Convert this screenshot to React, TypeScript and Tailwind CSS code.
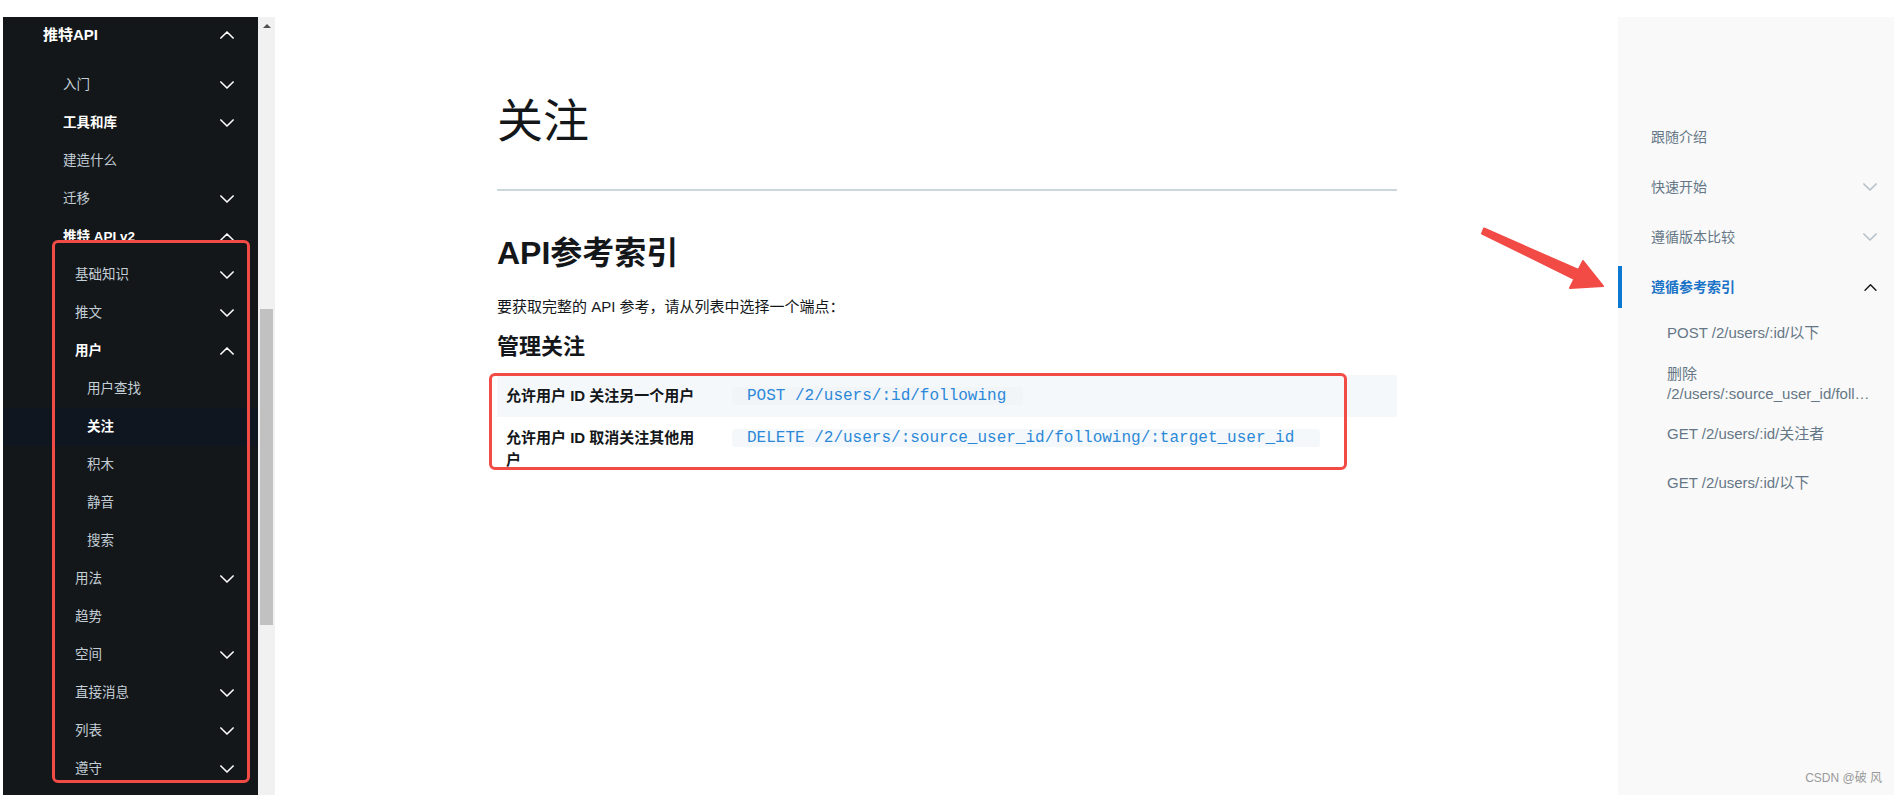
import React from 'react';

type NavItem = {
  label: string;
  level: 1 | 2 | 3 | 4;
  bold?: boolean;
  chevron?: 'up' | 'down';
  active?: boolean;
};

const navItems: NavItem[] = [
  { label: '入门', level: 2, chevron: 'down' },
  { label: '工具和库', level: 2, bold: true, chevron: 'down' },
  { label: '建造什么', level: 2 },
  { label: '迁移', level: 2, chevron: 'down' },
  { label: '推特 API v2', level: 2, bold: true, chevron: 'up' },
  { label: '基础知识', level: 3, chevron: 'down' },
  { label: '推文', level: 3, chevron: 'down' },
  { label: '用户', level: 3, bold: true, chevron: 'up' },
  { label: '用户查找', level: 4 },
  { label: '关注', level: 4, bold: true, active: true },
  { label: '积木', level: 4 },
  { label: '静音', level: 4 },
  { label: '搜索', level: 4 },
  { label: '用法', level: 3, chevron: 'down' },
  { label: '趋势', level: 3 },
  { label: '空间', level: 3, chevron: 'down' },
  { label: '直接消息', level: 3, chevron: 'down' },
  { label: '列表', level: 3, chevron: 'down' },
  { label: '遵守', level: 3, chevron: 'down' },
];

const indent: Record<number, string> = {
  1: 'pl-[40px]',
  2: 'pl-[60px]',
  3: 'pl-[72px]',
  4: 'pl-[84px]',
};

function Chevron({ dir, className }: { dir: 'up' | 'down'; className?: string }) {
  return (
    <svg viewBox="0 0 16 9" className={className} fill="none" stroke="currentColor" strokeWidth={1.8} strokeLinecap="round" strokeLinejoin="round">
      {dir === 'down' ? <path d="M1 1 L8 8 L15 1" /> : <path d="M1 8 L8 1 L15 8" />}
    </svg>
  );
}

function Sidebar() {
  return (
    <div className="w-[255px] h-full bg-[#14171a] overflow-hidden">
      <div className="h-[36px] flex items-center justify-between pl-[40px] pr-[24px]">
        <span className="text-[15px] font-bold text-white">推特API</span>
        <Chevron dir="up" className="w-[14px] h-[8px] text-white" />
      </div>
      <div className="mt-[13px]">
        {navItems.map((item) => (
          <div
            key={item.label}
            className={`h-[38px] flex items-center justify-between pr-[24px] ${indent[item.level]} ${item.active ? 'bg-[#0f1620]' : ''}`}
          >
            <span className={`text-[13.5px] ${item.bold ? 'font-bold text-white' : 'text-[#c3ced6]'}`}>{item.label}</span>
            {item.chevron && <Chevron dir={item.chevron} className="w-[14px] h-[8px] text-white" />}
          </div>
        ))}
      </div>
    </div>
  );
}

function Scrollbar() {
  return (
    <div className="w-[17px] h-full bg-[#f1f1f1] flex flex-col">
      <div className="h-[17px] flex items-center justify-center">
        <div className="w-0 h-0 border-l-[4px] border-r-[4px] border-b-[4px] border-l-transparent border-r-transparent border-b-[#505050]" />
      </div>
      <div className="mt-[275px] ml-[2px] w-[13px] h-[316px] bg-[#c1c1c1]" />
    </div>
  );
}

function MainContent() {
  return (
    <div className="flex-1 h-full bg-white pl-[222px]">
      <div className="w-[900px]">
        <h1 className="mt-[76px] text-[46px] leading-[56px] font-normal text-[#14171a]">关注</h1>
        <div className="mt-[40px] border-t-2 border-[#ccd6dd]" />
        <h2 className="mt-[42px] text-[32px] leading-[40px] font-bold text-[#14171a]">API参考索引</h2>
        <p className="mt-[23px] text-[15px] leading-[22px] text-[#14171a]">要获取完整的 API 参考，请从列表中选择一个端点：</p>
        <h3 className="mt-[14px] text-[22px] leading-[30px] font-bold text-[#14171a]">管理关注</h3>
        <div className="mt-[13px] text-[15px] leading-[22px]">
          <div className="grid grid-cols-[225px_1fr] bg-[#f5f8fa] py-[10px]">
            <div className="pl-[9px] pr-[20px] font-bold text-[#14171a]">允许用户 ID 关注另一个用户</div>
            <div className="pl-[10px] flex items-start pt-[2px]">
              <code className="font-['Liberation_Mono',monospace] text-[16px] leading-[18px] text-[#2b88d8] bg-[#f1f5f8] rounded-[3px] pl-[15px] pr-[17px]">
                POST /2/users/:id/following
              </code>
            </div>
          </div>
          <div className="grid grid-cols-[225px_1fr] bg-white py-[10px]">
            <div className="pl-[9px] pr-[20px] font-bold text-[#14171a]">允许用户 ID 取消关注其他用户</div>
            <div className="pl-[10px] flex items-start pt-[2px]">
              <code className="font-['Liberation_Mono',monospace] text-[16px] leading-[18px] text-[#2b88d8] bg-[#f5f8fa] rounded-[3px] pl-[15px] pr-[26px]">
                DELETE /2/users/:source_user_id/following/:target_user_id
              </code>
            </div>
          </div>
        </div>
      </div>
    </div>
  );
}

function RightPanel() {
  return (
    <div className="w-[276px] h-full bg-[#f9f9f9] pt-[95px] text-[14px]">
      <div className="h-[50px] flex items-center pl-[33px] text-[#657786]">跟随介绍</div>
      <div className="h-[50px] flex items-center justify-between pl-[33px] pr-[17px] text-[#657786]">
        <span>快速开始</span>
        <Chevron dir="down" className="w-[14px] h-[8px] text-[#b4c0c9]" />
      </div>
      <div className="h-[50px] flex items-center justify-between pl-[33px] pr-[17px] text-[#657786]">
        <span>遵循版本比较</span>
        <Chevron dir="down" className="w-[14px] h-[8px] text-[#b4c0c9]" />
      </div>
      <div className="h-[50px] flex items-center">
        <div className="w-[4px] h-[42px] bg-[#0b78d1]" />
        <div className="flex-1 flex items-center justify-between pl-[29px] pr-[17px]">
          <span className="font-bold text-[#1a73c7]">遵循参考索引</span>
          <Chevron dir="up" className="w-[13px] h-[7px] text-[#14171a]" />
        </div>
      </div>
      <div className="pl-[49px] text-[15px] leading-[20px] text-[#657786]">
        <div className="mt-[11px]">POST /2/users/:id/以下</div>
        <div className="mt-[21px]">
          删除
          <br />
          /2/users/:source_user_id/foll…
        </div>
        <div className="mt-[20px]">GET /2/users/:id/关注者</div>
        <div className="mt-[29px]">GET /2/users/:id/以下</div>
      </div>
    </div>
  );
}

export default function App() {
  return (
    <div className="relative w-[1894px] h-[795px] overflow-hidden bg-white font-['Liberation_Sans','Noto_Sans_CJK_SC',sans-serif]">
      <div className="flex h-full pt-[17px]">
        <div className="w-[3px] h-full bg-white" />
        <Sidebar />
        <Scrollbar />
        <MainContent />
        <RightPanel />
      </div>

      {/* annotation boxes */}
      <div className="absolute left-[52px] top-[240px] w-[198px] h-[543px] border-[3px] border-[#f24b46] rounded-[6px]" />
      <div className="absolute left-[489px] top-[373px] w-[858px] h-[97px] border-[3px] border-[#f24b46] rounded-[6px]" />

      {/* annotation arrow */}
      <svg className="absolute left-0 top-0" width="1894" height="795" viewBox="0 0 1894 795" fill="none">
        <polygon
          points="1484,228.5 1578.5,270 1583,261 1603,286 1570,288 1574.5,279 1482,233.5"
          fill="#f24b46"
          stroke="#f24b46"
          strokeWidth={2}
          strokeLinejoin="round"
        />
      </svg>

      <div className="absolute right-[12px] bottom-[8px] text-[12px] text-[#9a9a9a]">CSDN @破 风</div>
    </div>
  );
}
